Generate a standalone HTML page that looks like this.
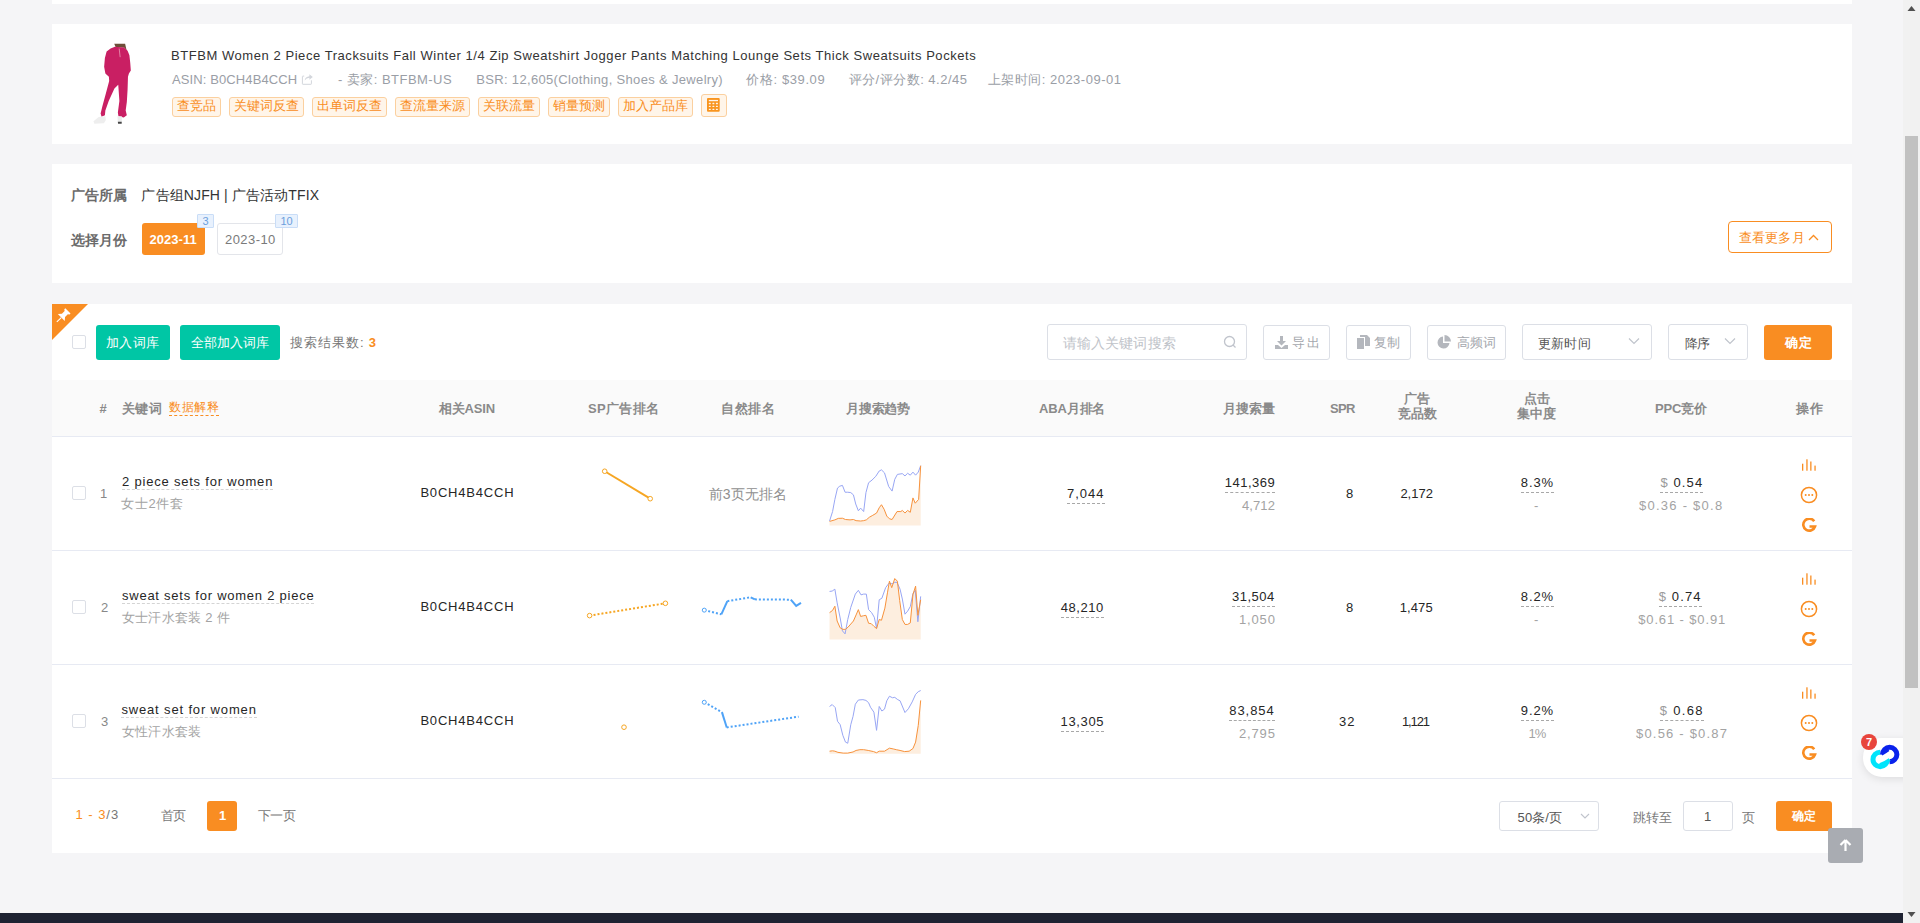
<!DOCTYPE html><html><head><meta charset="utf-8"><style>
html,body{margin:0;padding:0;}
body{width:1920px;height:923px;overflow:hidden;position:relative;background:#f5f5f7;font-family:"Liberation Sans",sans-serif;}
.t{position:absolute;white-space:nowrap;height:20px;line-height:20px;}

</style></head><body>
<div style="position:absolute;left:52px;top:0px;width:1800px;height:4px;background:#fff;"></div>
<div style="position:absolute;left:52px;top:24px;width:1800px;height:120px;background:#fff;"></div>
<div style="position:absolute;left:52px;top:164px;width:1800px;height:119px;background:#fff;"></div>
<div style="position:absolute;left:52px;top:304px;width:1800px;height:549px;background:#fff;"></div>
<svg style="position:absolute;left:82px;top:40px" width="60" height="88" viewBox="0 0 629 923">
<path d="M338,40 L452,40 L468,110 L445,82 L352,74 Z" fill="#6e4d38"/>
<path d="M345,70 L440,78 L478,112 L497,160 L506,240 L512,320 L492,352 L482,385 L478,520 L470,650 L458,740 L470,790 L438,812 L382,800 L376,760 L392,640 L380,470 L340,510 L280,640 L245,740 L240,790 L205,805 L195,770 L215,690 L250,560 L285,430 L282,385 L245,352 L232,280 L240,190 L258,120 L300,90 Z" fill="#c91f63"/>
<path d="M390,90 L400,180" stroke="#e9a0b9" stroke-width="8"/>
<path d="M120,852 L175,808 L245,800 L250,840 L230,872 L130,878 Z" fill="#eeeeee"/>
<path d="M372,800 L418,800 L418,868 L376,872 Z" fill="#ececec"/>
<path d="M376,858 L416,858 L416,878 L378,878 Z" fill="#444"/>
</svg>
<svg style="position:absolute;left:290px;top:66px" width="40" height="26" viewBox="0 0 40 26"><path d="M14.2,10.1 H12.9 Q12.4,10.1 12.4,10.6 V17.8 Q12.4,18.3 12.9,18.3 H20.9 Q21.4,18.3 21.4,17.8 V14.3" fill="none" stroke="#d3d6dc" stroke-width="1"/><path d="M14.6,14.6 Q15.2,10.8 19.4,10.3 V8.2 L22.8,11 L19.4,13.8 V11.8 Q16.5,11.9 14.6,14.6 Z" fill="#d3d6dc"/></svg>
<div style="position:absolute;left:172px;top:97px;width:47px;height:18px;border:1px solid #fbd09f;background:#fff5e9;border-radius:3px;color:#f98d22;font-size:13px;line-height:16px;text-align:center;white-space:nowrap">查竞品</div>
<div style="position:absolute;left:229px;top:97px;width:73px;height:18px;border:1px solid #fbd09f;background:#fff5e9;border-radius:3px;color:#f98d22;font-size:13px;line-height:16px;text-align:center;white-space:nowrap">关键词反查</div>
<div style="position:absolute;left:312px;top:97px;width:73px;height:18px;border:1px solid #fbd09f;background:#fff5e9;border-radius:3px;color:#f98d22;font-size:13px;line-height:16px;text-align:center;white-space:nowrap">出单词反查</div>
<div style="position:absolute;left:395px;top:97px;width:73px;height:18px;border:1px solid #fbd09f;background:#fff5e9;border-radius:3px;color:#f98d22;font-size:13px;line-height:16px;text-align:center;white-space:nowrap">查流量来源</div>
<div style="position:absolute;left:478px;top:97px;width:60px;height:18px;border:1px solid #fbd09f;background:#fff5e9;border-radius:3px;color:#f98d22;font-size:13px;line-height:16px;text-align:center;white-space:nowrap">关联流量</div>
<div style="position:absolute;left:548px;top:97px;width:60px;height:18px;border:1px solid #fbd09f;background:#fff5e9;border-radius:3px;color:#f98d22;font-size:13px;line-height:16px;text-align:center;white-space:nowrap">销量预测</div>
<div style="position:absolute;left:618px;top:97px;width:73px;height:18px;border:1px solid #fbd09f;background:#fff5e9;border-radius:3px;color:#f98d22;font-size:13px;line-height:16px;text-align:center;white-space:nowrap">加入产品库</div>
<div style="position:absolute;left:701px;top:94px;width:24px;height:21px;border:1px solid #fbd09f;background:#fff5e9;border-radius:3px;"></div>
<svg style="position:absolute;left:696px;top:90px" width="36" height="30" viewBox="0 0 36 30"><rect x="11" y="8" width="12.7" height="13.75" rx="1" fill="#f9951f"/><rect x="12.8" y="9.9" width="9.2" height="1.3" fill="#fff5e9"/><g fill="#fff5e9"><rect x="12.8" y="12.85" width="2" height="1.3" rx="0.5"/><rect x="16.4" y="12.85" width="2" height="1.3" rx="0.5"/><rect x="19.9" y="12.85" width="2" height="1.3" rx="0.5"/><rect x="12.8" y="15.75" width="2" height="1.3" rx="0.5"/><rect x="16.4" y="15.75" width="2" height="1.3" rx="0.5"/><rect x="19.9" y="15.75" width="2" height="1.3" rx="0.5"/><rect x="12.8" y="18.65" width="2" height="1.3" rx="0.5"/><rect x="16.4" y="18.65" width="2" height="1.3" rx="0.5"/><rect x="19.9" y="18.65" width="2" height="1.3" rx="0.5"/></g></svg>
<div style="position:absolute;left:142px;top:223px;width:63px;height:32px;background:#f98d22;border-radius:3px;"></div>
<div style="position:absolute;left:217px;top:223px;width:64px;height:30px;border:1px solid #e3e5ea;border-radius:3px;background:#fff"></div>
<div style="position:absolute;left:197px;top:214px;width:15px;height:12px;background:#e8f1fd;border:1px solid #c9ddf7;border-radius:1px;color:#6d9fdc;font-size:11px;line-height:12px;text-align:center">3</div>
<div style="position:absolute;left:275px;top:214px;width:21px;height:12px;background:#e8f1fd;border:1px solid #c9ddf7;border-radius:1px;color:#6d9fdc;font-size:11px;line-height:12px;text-align:center">10</div>
<div style="position:absolute;left:1728px;top:221px;width:102px;height:30px;border:1px solid #f98d22;border-radius:4px;background:#fff"></div>
<svg style="position:absolute;left:1808px;top:233px" width="12" height="9" viewBox="0 0 12 9"><path d="M1 7 L5.5 2.5 L10 7" fill="none" stroke="#f98d22" stroke-width="1.3"/></svg>
<svg style="position:absolute;left:52px;top:304px" width="36" height="36" viewBox="0 0 36 36"><path d="M0 0 H36 L0 36 Z" fill="#f98d22"/><g transform="translate(10.1,12.7) rotate(45) scale(0.97)"><path d="M-3.8 -8.5 H3.8 V-7 L2.3 -6 L2.3 -2 L5 1.2 H-5 L-2.3 -2 L-2.3 -6 L-3.8 -7 Z" fill="#fff"/><rect x="-0.55" y="1.2" width="1.1" height="6.5" fill="#fff"/></g></svg>
<div style="position:absolute;left:72px;top:335px;width:12px;height:12px;border:1px solid #dcdfe6;border-radius:2px;background:#fff"></div>
<div style="position:absolute;left:96px;top:325px;width:74px;height:35px;background:#00c6a5;border-radius:3px;"></div>
<div style="position:absolute;left:180px;top:325px;width:100px;height:35px;background:#00c6a5;border-radius:3px;"></div>
<div style="position:absolute;left:1047px;top:324px;width:198px;height:34px;border:1px solid #dcdfe6;border-radius:3px;background:#fff"></div>
<svg style="position:absolute;left:1223px;top:335px" width="14" height="14" viewBox="0 0 14 14"><circle cx="6.5" cy="6.5" r="5" fill="none" stroke="#c0c4cc" stroke-width="1.3"/><path d="M10 10 L12.5 12.5" stroke="#c0c4cc" stroke-width="1.3"/></svg>
<div style="position:absolute;left:1263px;top:325px;width:65px;height:33px;border:1px solid #dcdfe6;border-radius:3px;background:#fff"></div>
<svg style="position:absolute;left:1275px;top:336px" width="13" height="13" viewBox="0 0 13 13"><path d="M5 0 H8 V5 H11 L6.5 9.5 L2 5 H5 Z" fill="#b4b7bd"/><path d="M0 9 H3 L6.5 12 L10 9 H13 V13 H0 Z" fill="#b4b7bd"/></svg>
<div style="position:absolute;left:1346px;top:325px;width:63px;height:33px;border:1px solid #dcdfe6;border-radius:3px;background:#fff"></div>
<svg style="position:absolute;left:1357px;top:335px" width="13" height="14" viewBox="0 0 13 14"><path d="M0 3 H7 V14 H0 Z" fill="#b4b7bd"/><path d="M3 0 H10 L13 3 V11 H8 V2 H3 Z" fill="#b4b7bd"/></svg>
<div style="position:absolute;left:1427px;top:325px;width:77px;height:33px;border:1px solid #dcdfe6;border-radius:3px;background:#fff"></div>
<svg style="position:absolute;left:1437px;top:335px" width="14" height="14" viewBox="0 0 14 14"><path d="M6 1.5 A6 6 0 1 0 12.5 8 H6 Z" fill="#b4b7bd"/><path d="M7.5 0 A6.5 6.5 0 0 1 14 6.5 H7.5 Z" fill="#b4b7bd"/></svg>
<div style="position:absolute;left:1522px;top:324px;width:128px;height:34px;border:1px solid #dcdfe6;border-radius:3px;background:#fff"></div>
<svg style="position:absolute;left:1628px;top:337px" width="12" height="8" viewBox="0 0 12 8"><path d="M1 1.5 L6 6.5 L11 1.5" fill="none" stroke="#c0c4cc" stroke-width="1.2"/></svg>
<div style="position:absolute;left:1668px;top:324px;width:78px;height:34px;border:1px solid #dcdfe6;border-radius:3px;background:#fff"></div>
<svg style="position:absolute;left:1724px;top:337px" width="12" height="8" viewBox="0 0 12 8"><path d="M1 1.5 L6 6.5 L11 1.5" fill="none" stroke="#c0c4cc" stroke-width="1.2"/></svg>
<div style="position:absolute;left:1764px;top:325px;width:68px;height:35px;background:#f98d22;border-radius:3px;"></div>
<div style="position:absolute;left:52px;top:380px;width:1800px;height:56px;background:#fafafa;"></div>
<div style="position:absolute;left:52px;top:436px;width:1800px;height:1px;background:#e7eaf3;"></div>
<div style="position:absolute;left:52px;top:550px;width:1800px;height:1px;background:#e7eaf3;"></div>
<div style="position:absolute;left:72px;top:486px;width:12px;height:12px;border:1px solid #dcdfe6;border-radius:2px;background:#fff"></div>
<svg style="position:absolute;left:1801px;top:458px" width="16" height="14" viewBox="0 0 16 14"><g fill="#f98d22"><rect x="1" y="5.7" width="1.3" height="7"/><rect x="5.3" y="1.3" width="1.3" height="11.4"/><rect x="9.2" y="3.5" width="1.3" height="9.2"/><rect x="13.4" y="7.6" width="1.3" height="5.1"/></g></svg>
<svg style="position:absolute;left:1800px;top:486px" width="18" height="18" viewBox="0 0 18 18"><circle cx="9" cy="9" r="7.6" fill="none" stroke="#f98d22" stroke-width="1.5"/><g fill="#f98d22"><circle cx="5.7" cy="9" r="1"/><circle cx="9" cy="9" r="1"/><circle cx="12.3" cy="9" r="1"/></g></svg>
<svg style="position:absolute;left:1801px;top:518px" width="16" height="15" viewBox="0 0 16 15"><path d="M13.2 3.2 A6 6 0 1 0 14 8.5 H8.5" fill="none" stroke="#f98d22" stroke-width="2.6"/></svg>
<div style="position:absolute;left:52px;top:664px;width:1800px;height:1px;background:#e7eaf3;"></div>
<div style="position:absolute;left:72px;top:600px;width:12px;height:12px;border:1px solid #dcdfe6;border-radius:2px;background:#fff"></div>
<svg style="position:absolute;left:1801px;top:572px" width="16" height="14" viewBox="0 0 16 14"><g fill="#f98d22"><rect x="1" y="5.7" width="1.3" height="7"/><rect x="5.3" y="1.3" width="1.3" height="11.4"/><rect x="9.2" y="3.5" width="1.3" height="9.2"/><rect x="13.4" y="7.6" width="1.3" height="5.1"/></g></svg>
<svg style="position:absolute;left:1800px;top:600px" width="18" height="18" viewBox="0 0 18 18"><circle cx="9" cy="9" r="7.6" fill="none" stroke="#f98d22" stroke-width="1.5"/><g fill="#f98d22"><circle cx="5.7" cy="9" r="1"/><circle cx="9" cy="9" r="1"/><circle cx="12.3" cy="9" r="1"/></g></svg>
<svg style="position:absolute;left:1801px;top:632px" width="16" height="15" viewBox="0 0 16 15"><path d="M13.2 3.2 A6 6 0 1 0 14 8.5 H8.5" fill="none" stroke="#f98d22" stroke-width="2.6"/></svg>
<div style="position:absolute;left:52px;top:778px;width:1800px;height:1px;background:#e7eaf3;"></div>
<div style="position:absolute;left:72px;top:714px;width:12px;height:12px;border:1px solid #dcdfe6;border-radius:2px;background:#fff"></div>
<svg style="position:absolute;left:1801px;top:686px" width="16" height="14" viewBox="0 0 16 14"><g fill="#f98d22"><rect x="1" y="5.7" width="1.3" height="7"/><rect x="5.3" y="1.3" width="1.3" height="11.4"/><rect x="9.2" y="3.5" width="1.3" height="9.2"/><rect x="13.4" y="7.6" width="1.3" height="5.1"/></g></svg>
<svg style="position:absolute;left:1800px;top:714px" width="18" height="18" viewBox="0 0 18 18"><circle cx="9" cy="9" r="7.6" fill="none" stroke="#f98d22" stroke-width="1.5"/><g fill="#f98d22"><circle cx="5.7" cy="9" r="1"/><circle cx="9" cy="9" r="1"/><circle cx="12.3" cy="9" r="1"/></g></svg>
<svg style="position:absolute;left:1801px;top:746px" width="16" height="15" viewBox="0 0 16 15"><path d="M13.2 3.2 A6 6 0 1 0 14 8.5 H8.5" fill="none" stroke="#f98d22" stroke-width="2.6"/></svg>
<svg style="position:absolute;left:580px;top:455px" width="100" height="60" viewBox="0 0 100 60"><path d="M24.7 16.25 L70.2 43.7" stroke="#f6a623" stroke-width="2"/><circle cx="24.7" cy="16.25" r="2.3" fill="#fff" stroke="#f6a623" stroke-width="1"/><circle cx="70.2" cy="43.7" r="2.3" fill="#fff" stroke="#f6a623" stroke-width="1"/></svg>
<svg style="position:absolute;left:580px;top:590px" width="100" height="40" viewBox="0 0 100 40"><path d="M9.6 25.6 L85.4 13.3" stroke="#f6a623" stroke-width="2" stroke-dasharray="2 2"/><circle cx="9.6" cy="25.6" r="2.3" fill="#fff" stroke="#f6a623" stroke-width="1"/><circle cx="85.4" cy="13.3" r="2.3" fill="#fff" stroke="#f6a623" stroke-width="1"/></svg>
<svg style="position:absolute;left:600px;top:710px" width="50" height="30" viewBox="0 0 50 30"><circle cx="24" cy="17.2" r="2.3" fill="#fff" stroke="#f6a623" stroke-width="1"/></svg>
<svg style="position:absolute;left:695px;top:585px" width="115" height="40" viewBox="0 0 115 40" fill="none"><path d="M9.28 25.15 L26.35 29.34" stroke="#4fa3f7" stroke-width="2" stroke-dasharray="2 2"/><path d="M26.35 29.34 L32.34 16.17" stroke="#4fa3f7" stroke-width="2"/><path d="M32.34 16.17 L55.69 12.28" stroke="#4fa3f7" stroke-width="2" stroke-dasharray="2 2"/><path d="M55.69 12.28 L59.88 14.37" stroke="#4fa3f7" stroke-width="2"/><path d="M59.88 14.37 L95.81 14.67" stroke="#4fa3f7" stroke-width="2" stroke-dasharray="2 2"/><path d="M95.81 14.67 L101.20 20.96 L105.99 17.96" stroke="#4fa3f7" stroke-width="2"/><circle cx="9.28" cy="25.15" r="2" fill="#fff" stroke="#4fa3f7" stroke-width="1"/></svg>
<svg style="position:absolute;left:695px;top:690px" width="115" height="50" viewBox="0 0 115 50" fill="none"><path d="M9.28 12.28 L26.95 22.16" stroke="#4fa3f7" stroke-width="2" stroke-dasharray="2 2"/><path d="M26.95 22.16 L31.74 37.43" stroke="#4fa3f7" stroke-width="2"/><path d="M31.74 37.43 L103.59 26.65" stroke="#4fa3f7" stroke-width="2" stroke-dasharray="2 2"/><circle cx="9.28" cy="12.28" r="2" fill="#fff" stroke="#4fa3f7" stroke-width="1"/></svg>
<svg style="position:absolute;left:825px;top:460px" width="100" height="70" viewBox="0 0 100 70"><polygon points="4.55,65.58 4.55,61.41 9.86,59.89 13.27,58.38 17.44,58.23 20.47,59.51 25.02,59.89 28.43,59.51 31.08,60.65 35.63,61.03 38.67,60.65 41.32,59.89 44.35,57.24 47.76,55.34 51.55,53.07 54.21,47.76 56.48,44.73 59.14,49.28 61.79,56.10 64.44,58.76 67.10,59.51 72.02,51.55 75.82,51.55 77.33,50.42 79.98,53.07 82.64,50.42 85.29,52.31 87.95,37.91 90.22,43.21 93.63,39.42 95.68,5.69 95.68,65.58" fill="#fdeedf"/><polyline points="4.55,61.03 7.58,51.55 9.86,39.42 12.51,28.05 14.78,26.16 17.44,25.40 20.09,32.22 22.74,32.22 25.78,32.60 28.43,34.87 30.71,43.97 33.36,50.80 35.63,48.14 38.67,51.55 40.94,32.60 43.59,22.74 47.01,20.09 50.80,16.30 54.21,10.99 56.48,9.86 59.51,12.89 63.68,26.54 67.10,31.08 69.75,19.33 72.40,14.40 77.33,13.65 79.98,15.92 82.64,13.27 85.29,15.16 87.95,12.13 90.60,15.16 93.25,12.13 95.68,5.69" fill="none" stroke="#98a6f4" stroke-width="1"/><polyline points="4.55,61.41 9.86,59.89 13.27,58.38 17.44,58.23 20.47,59.51 25.02,59.89 28.43,59.51 31.08,60.65 35.63,61.03 38.67,60.65 41.32,59.89 44.35,57.24 47.76,55.34 51.55,53.07 54.21,47.76 56.48,44.73 59.14,49.28 61.79,56.10 64.44,58.76 67.10,59.51 72.02,51.55 75.82,51.55 77.33,50.42 79.98,53.07 82.64,50.42 85.29,52.31 87.95,37.91 90.22,43.21 93.63,39.42 95.68,5.69" fill="none" stroke="#f7923c" stroke-width="1"/></svg>
<svg style="position:absolute;left:825px;top:574px" width="100" height="70" viewBox="0 0 100 70"><polygon points="4.55,65.58 4.55,38.67 7.58,36.39 9.86,32.22 12.13,47.01 15.16,53.83 17.82,55.34 20.47,55.34 23.12,53.07 25.78,50.04 28.43,47.01 31.08,40.94 33.36,35.63 35.63,42.46 38.67,41.70 40.94,41.32 43.59,49.28 46.25,49.66 48.90,52.31 51.55,54.59 54.21,45.49 56.48,46.25 59.89,34.12 62.55,18.20 64.44,7.20 66.72,13.65 69.75,4.55 72.40,7.20 74.68,26.54 77.33,45.49 79.98,50.42 82.64,50.42 85.29,48.90 87.95,20.47 90.60,12.13 92.87,41.32 95.68,25.78 95.68,65.58" fill="#fdeedf"/><polyline points="4.55,17.44 7.20,17.06 9.86,15.16 12.13,28.81 15.16,43.97 17.44,56.86 20.09,59.89 22.74,45.49 25.78,33.36 30.33,20.09 33.36,16.30 36.01,20.85 38.67,20.09 41.32,20.09 43.59,35.63 46.63,38.67 49.28,43.21 51.55,54.21 54.21,25.78 56.86,24.26 60.65,13.65 64.06,9.10 67.10,9.86 69.75,8.34 72.02,8.34 75.06,15.16 77.33,25.02 79.98,40.18 82.64,37.15 85.29,32.60 87.95,19.71 90.22,16.30 92.87,47.76 95.68,22.37" fill="none" stroke="#98a6f4" stroke-width="1"/><polyline points="4.55,38.67 7.58,36.39 9.86,32.22 12.13,47.01 15.16,53.83 17.82,55.34 20.47,55.34 23.12,53.07 25.78,50.04 28.43,47.01 31.08,40.94 33.36,35.63 35.63,42.46 38.67,41.70 40.94,41.32 43.59,49.28 46.25,49.66 48.90,52.31 51.55,54.59 54.21,45.49 56.48,46.25 59.89,34.12 62.55,18.20 64.44,7.20 66.72,13.65 69.75,4.55 72.40,7.20 74.68,26.54 77.33,45.49 79.98,50.42 82.64,50.42 85.29,48.90 87.95,20.47 90.60,12.13 92.87,41.32 95.68,25.78" fill="none" stroke="#f7923c" stroke-width="1"/></svg>
<svg style="position:absolute;left:825px;top:686px" width="100" height="70" viewBox="0 0 100 70"><polygon points="4.55,67.70 4.55,65.20 7.58,64.82 9.86,65.20 12.89,66.34 18.20,67.10 22.74,67.10 28.05,65.96 31.08,64.44 34.87,63.68 38.67,63.68 43.21,64.44 48.52,65.58 51.55,66.72 54.21,65.20 59.51,65.20 64.44,62.17 68.23,62.93 71.27,63.68 75.06,64.44 79.61,65.58 84.15,65.20 87.95,62.55 90.60,56.10 93.25,39.42 95.68,14.40 95.68,67.70" fill="#fdeedf"/><polyline points="4.55,20.47 7.20,18.57 10.24,21.61 12.51,35.25 15.16,38.67 17.82,49.28 20.47,56.10 22.74,57.24 25.78,38.67 28.05,30.33 30.33,18.20 33.36,14.03 37.91,13.65 40.94,14.40 43.59,16.68 45.49,21.23 48.90,26.16 51.55,44.35 54.21,20.47 56.86,25.02 59.51,23.12 61.79,14.78 64.44,10.24 67.48,11.75 69.75,11.37 72.78,13.65 75.06,14.78 79.98,26.54 83.40,22.74 87.19,15.92 90.60,8.34 93.25,5.69 95.68,4.55" fill="none" stroke="#98a6f4" stroke-width="1"/><polyline points="4.55,65.20 7.58,64.82 9.86,65.20 12.89,66.34 18.20,67.10 22.74,67.10 28.05,65.96 31.08,64.44 34.87,63.68 38.67,63.68 43.21,64.44 48.52,65.58 51.55,66.72 54.21,65.20 59.51,65.20 64.44,62.17 68.23,62.93 71.27,63.68 75.06,64.44 79.61,65.58 84.15,65.20 87.95,62.55 90.60,56.10 93.25,39.42 95.68,14.40" fill="none" stroke="#f7923c" stroke-width="1"/></svg>
<div style="position:absolute;left:207px;top:801px;width:30px;height:30px;background:#f98d22;border-radius:3px;"></div>
<div style="position:absolute;left:1499px;top:801px;width:98px;height:28px;border:1px solid #dcdfe6;border-radius:3px;background:#fff"></div>
<svg style="position:absolute;left:1580px;top:813px" width="10" height="7" viewBox="0 0 10 7"><path d="M1 1 L5 5 L9 1" fill="none" stroke="#c0c4cc" stroke-width="1.1"/></svg>
<div style="position:absolute;left:1683px;top:801px;width:48px;height:28px;border:1px solid #dcdfe6;border-radius:3px;background:#fff"></div>
<div style="position:absolute;left:1776px;top:801px;width:56px;height:30px;background:#f98d22;border-radius:3px;"></div>
<div id="title" class="t" style="left:171.00px;top:45.90px;font-size:13px;color:#333;font-weight:400;letter-spacing:0.555px;">BTFBM Women 2 Piece Tracksuits Fall Winter 1/4 Zip Sweatshirt Jogger Pants Matching Lounge Sets Thick Sweatsuits Pockets</div>
<div id="asin" class="t" style="left:172.00px;top:70.10px;font-size:13px;color:#9a9ea6;font-weight:400;letter-spacing:0.113px;">ASIN: B0CH4B4CCH</div>
<div id="seller" class="t" style="left:338.00px;top:70.10px;font-size:13px;color:#9a9ea6;font-weight:400;letter-spacing:0.462px;">- 卖家: BTFBM-US</div>
<div id="bsr" class="t" style="left:476.19px;top:70.10px;font-size:13px;color:#9a9ea6;font-weight:400;letter-spacing:0.335px;">BSR: 12,605(Clothing, Shoes &amp; Jewelry)</div>
<div id="price" class="t" style="left:746.39px;top:70.10px;font-size:13px;color:#9a9ea6;font-weight:400;letter-spacing:0.589px;">价格: $39.09</div>
<div id="rating" class="t" style="left:848.60px;top:70.10px;font-size:13px;color:#9a9ea6;font-weight:400;letter-spacing:0.492px;">评分/评分数: 4.2/45</div>
<div id="date" class="t" style="left:987.60px;top:70.10px;font-size:13px;color:#9a9ea6;font-weight:400;letter-spacing:0.513px;">上架时间: 2023-09-01</div>
<div id="adl" class="t" style="left:71.39px;top:185.10px;font-size:14px;color:#6b6b6b;font-weight:700;letter-spacing:-0.233px;">广告所属</div>
<div id="adv" class="t" style="left:141.39px;top:185.10px;font-size:14px;color:#333;font-weight:400;letter-spacing:0.129px;">广告组NJFH | 广告活动TFIX</div>
<div id="monl" class="t" style="left:71.39px;top:229.50px;font-size:14px;color:#6b6b6b;font-weight:700;letter-spacing:-0.233px;">选择月份</div>
<div id="m11" class="t" style="left:149.39px;top:229.90px;font-size:13px;color:#fff;font-weight:700;letter-spacing:0.067px;">2023-11</div>
<div id="m10" class="t" style="left:225.00px;top:229.90px;font-size:13px;color:#7a7a7a;font-weight:400;letter-spacing:0.433px;">2023-10</div>
<div id="more" class="t" style="left:1738.50px;top:227.50px;font-size:13px;color:#f98d22;font-weight:400;letter-spacing:0.288px;">查看更多月</div>
<div id="add1" class="t" style="left:106.39px;top:332.80px;font-size:13px;color:#fff;font-weight:400;letter-spacing:0.100px;">加入词库</div>
<div id="add2" class="t" style="left:191.00px;top:332.80px;font-size:13px;color:#fff;font-weight:400;letter-spacing:0.000px;">全部加入词库</div>
<div id="cnt" class="t" style="left:290.00px;top:332.80px;font-size:13px;color:#777;font-weight:400;letter-spacing:1.000px;">搜索结果数:</div>
<div id="cnt3" class="t" style="left:368.79px;top:332.80px;font-size:13px;color:#f98d22;font-weight:700;letter-spacing:0.000px;">3</div>
<div id="ph" class="t" style="left:1062.50px;top:333.10px;font-size:14px;color:#c0c3c9;font-weight:400;letter-spacing:0.179px;">请输入关键词搜索</div>
<div id="exp" class="t" style="left:1292.00px;top:332.80px;font-size:13px;color:#a4a7ad;font-weight:400;letter-spacing:1.750px;">导出</div>
<div id="copy" class="t" style="left:1373.50px;top:332.80px;font-size:13px;color:#a4a7ad;font-weight:400;letter-spacing:0.500px;">复制</div>
<div id="freq" class="t" style="left:1456.50px;top:332.80px;font-size:13px;color:#a4a7ad;font-weight:400;letter-spacing:0.125px;">高频词</div>
<div id="sort" class="t" style="left:1538.00px;top:333.50px;font-size:13px;color:#555;font-weight:400;letter-spacing:0.233px;">更新时间</div>
<div id="ord" class="t" style="left:1684.79px;top:333.50px;font-size:13px;color:#555;font-weight:400;letter-spacing:-0.400px;">降序</div>
<div id="ok" class="t" style="left:1785.00px;top:332.90px;font-size:13px;color:#fff;font-weight:700;letter-spacing:0.500px;">确定</div>
<div id="h_idx" class="t" style="left:99.60px;top:399.30px;font-size:13px;color:#8a8a8a;font-weight:700;letter-spacing:0.000px;">#</div>
<div id="h_kw" class="t" style="left:122.00px;top:399.30px;font-size:13px;color:#8a8a8a;font-weight:700;letter-spacing:0.350px;">关键词</div>
<div id="h_exp" class="t" style="left:169.39px;top:396.90px;font-size:12px;color:#f98d22;font-weight:400;letter-spacing:0.467px;"><span class="ul" style="border-bottom:1px dashed #f98d22;padding-bottom:1px">数据解释</span></div>
<div id="h_asin" class="t" style="left:439.00px;top:399.30px;font-size:13px;color:#8a8a8a;font-weight:700;letter-spacing:-0.200px;">相关ASIN</div>
<div id="h_sp" class="t" style="left:588.00px;top:399.30px;font-size:13px;color:#8a8a8a;font-weight:700;letter-spacing:0.340px;">SP广告排名</div>
<div id="h_nat" class="t" style="left:721.39px;top:399.30px;font-size:13px;color:#8a8a8a;font-weight:700;letter-spacing:0.533px;">自然排名</div>
<div id="h_trend" class="t" style="left:846.00px;top:399.30px;font-size:13px;color:#8a8a8a;font-weight:700;letter-spacing:-0.250px;">月搜索趋势</div>
<div id="h_aba" class="t" style="left:1039.00px;top:399.30px;font-size:13px;color:#8a8a8a;font-weight:700;letter-spacing:-0.140px;">ABA月排名</div>
<div id="h_vol" class="t" style="left:1223.00px;top:399.30px;font-size:13px;color:#8a8a8a;font-weight:700;letter-spacing:0.000px;">月搜索量</div>
<div id="h_spr" class="t" style="left:1330.00px;top:399.30px;font-size:13px;color:#8a8a8a;font-weight:700;letter-spacing:-0.650px;">SPR</div>
<div id="h_ad1" class="t" style="left:1403.70px;top:389.00px;font-size:13px;color:#8a8a8a;font-weight:700;letter-spacing:0.000px;">广告</div>
<div id="h_ad2" class="t" style="left:1397.60px;top:404.00px;font-size:13px;color:#8a8a8a;font-weight:700;letter-spacing:0.200px;">竞品数</div>
<div id="h_cl1" class="t" style="left:1523.70px;top:389.00px;font-size:13px;color:#8a8a8a;font-weight:700;letter-spacing:0.000px;">点击</div>
<div id="h_cl2" class="t" style="left:1517.39px;top:404.00px;font-size:13px;color:#8a8a8a;font-weight:700;letter-spacing:0.000px;">集中度</div>
<div id="h_ppc" class="t" style="left:1655.00px;top:399.30px;font-size:13px;color:#8a8a8a;font-weight:700;letter-spacing:-0.175px;">PPC竞价</div>
<div id="h_op" class="t" style="left:1796.00px;top:399.30px;font-size:13px;color:#8a8a8a;font-weight:700;letter-spacing:0.700px;">操作</div>
<div id="r0_idx" class="t" style="left:100.00px;top:483.50px;font-size:13px;color:#888;font-weight:400;letter-spacing:0.000px;">1</div>
<div id="r0_kw" class="t" style="left:122.00px;top:471.90px;font-size:13px;color:#262626;font-weight:400;letter-spacing:0.795px;"><span class="ul" style="border-bottom:1px dashed #d4d4d4;padding-bottom:0px">2 piece sets for women</span></div>
<div id="r0_zh" class="t" style="left:121.39px;top:493.50px;font-size:13px;color:#a3a3a3;font-weight:400;letter-spacing:0.500px;">女士2件套</div>
<div id="r0_asin" class="t" style="left:420.39px;top:483.40px;font-size:13px;color:#262626;font-weight:400;letter-spacing:0.800px;">B0CH4B4CCH</div>
<div id="r0_nat" class="t" style="left:708.60px;top:483.50px;font-size:14px;color:#8f8f8f;font-weight:400;letter-spacing:0.180px;">前3页无排名</div>
<div id="r0_aba" class="t" style="left:1067.00px;top:483.60px;font-size:13px;color:#262626;font-weight:400;letter-spacing:1.000px;"><span class="ul" style="border-bottom:1px dashed #a8a8a8;padding-bottom:2px">7,044</span></div>
<div id="r0_vol" class="t" style="left:1224.79px;top:472.80px;font-size:13px;color:#262626;font-weight:400;letter-spacing:0.500px;"><span class="ul" style="border-bottom:1px dashed #a8a8a8;padding-bottom:2px">141,369</span></div>
<div id="r0_vol2" class="t" style="left:1242.00px;top:495.60px;font-size:13px;color:#a3a3a3;font-weight:400;letter-spacing:0.100px;">4,712</div>
<div id="r0_spr" class="t" style="left:1346.00px;top:483.50px;font-size:13px;color:#262626;font-weight:400;letter-spacing:0.000px;">8</div>
<div id="r0_ads" class="t" style="left:1400.39px;top:483.50px;font-size:13px;color:#262626;font-weight:400;letter-spacing:0.000px;">2,172</div>
<div id="r0_click" class="t" style="left:1520.79px;top:472.75px;font-size:13px;color:#262626;font-weight:400;letter-spacing:0.900px;"><span class="ul" style="border-bottom:1px dashed #a8a8a8;padding-bottom:2px">8.3%</span></div>
<div id="r0_click2" class="t" style="left:1534.00px;top:495.50px;font-size:13px;color:#a3a3a3;font-weight:400;letter-spacing:0.000px;">-</div>
<div id="r0_ppc" class="t" style="left:1660.39px;top:472.75px;font-size:13px;color:#262626;font-weight:400;letter-spacing:1.120px;"><span class="ul" style="border-bottom:1px dashed #a8a8a8;padding-bottom:2px"><span style="color:#9a9a9a">$</span> 0.54</span></div>
<div id="r0_rng" class="t" style="left:1639.00px;top:495.50px;font-size:13px;color:#a3a3a3;font-weight:400;letter-spacing:1.255px;">$0.36 - $0.8</div>
<div id="r1_idx" class="t" style="left:101.00px;top:597.50px;font-size:13px;color:#888;font-weight:400;letter-spacing:0.000px;">2</div>
<div id="r1_kw" class="t" style="left:122.00px;top:585.90px;font-size:13px;color:#262626;font-weight:400;letter-spacing:0.756px;"><span class="ul" style="border-bottom:1px dashed #d4d4d4;padding-bottom:0px">sweat sets for women 2 piece</span></div>
<div id="r1_zh" class="t" style="left:122.00px;top:607.50px;font-size:13px;color:#a3a3a3;font-weight:400;letter-spacing:0.244px;">女士汗水套装 2 件</div>
<div id="r1_asin" class="t" style="left:420.39px;top:597.40px;font-size:13px;color:#262626;font-weight:400;letter-spacing:0.800px;">B0CH4B4CCH</div>
<div id="r1_aba" class="t" style="left:1060.79px;top:597.60px;font-size:13px;color:#262626;font-weight:400;letter-spacing:0.540px;"><span class="ul" style="border-bottom:1px dashed #a8a8a8;padding-bottom:2px">48,210</span></div>
<div id="r1_vol" class="t" style="left:1232.00px;top:586.80px;font-size:13px;color:#262626;font-weight:400;letter-spacing:0.480px;"><span class="ul" style="border-bottom:1px dashed #a8a8a8;padding-bottom:2px">31,504</span></div>
<div id="r1_vol2" class="t" style="left:1239.00px;top:609.60px;font-size:13px;color:#a3a3a3;font-weight:400;letter-spacing:0.850px;">1,050</div>
<div id="r1_spr" class="t" style="left:1346.00px;top:597.50px;font-size:13px;color:#262626;font-weight:400;letter-spacing:0.000px;">8</div>
<div id="r1_ads" class="t" style="left:1399.79px;top:597.50px;font-size:13px;color:#262626;font-weight:400;letter-spacing:0.075px;">1,475</div>
<div id="r1_click" class="t" style="left:1520.79px;top:586.75px;font-size:13px;color:#262626;font-weight:400;letter-spacing:0.900px;"><span class="ul" style="border-bottom:1px dashed #a8a8a8;padding-bottom:2px">8.2%</span></div>
<div id="r1_click2" class="t" style="left:1534.00px;top:609.50px;font-size:13px;color:#a3a3a3;font-weight:400;letter-spacing:0.000px;">-</div>
<div id="r1_ppc" class="t" style="left:1658.79px;top:586.75px;font-size:13px;color:#262626;font-weight:400;letter-spacing:1.120px;"><span class="ul" style="border-bottom:1px dashed #a8a8a8;padding-bottom:2px"><span style="color:#9a9a9a">$</span> 0.74</span></div>
<div id="r1_rng" class="t" style="left:1638.19px;top:609.50px;font-size:13px;color:#a3a3a3;font-weight:400;letter-spacing:0.867px;">$0.61 - $0.91</div>
<div id="r2_idx" class="t" style="left:101.00px;top:711.50px;font-size:13px;color:#888;font-weight:400;letter-spacing:0.000px;">3</div>
<div id="r2_kw" class="t" style="left:121.39px;top:699.90px;font-size:13px;color:#262626;font-weight:400;letter-spacing:0.850px;"><span class="ul" style="border-bottom:1px dashed #d4d4d4;padding-bottom:0px">sweat set for women</span></div>
<div id="r2_zh" class="t" style="left:122.00px;top:721.50px;font-size:13px;color:#a3a3a3;font-weight:400;letter-spacing:0.200px;">女性汗水套装</div>
<div id="r2_asin" class="t" style="left:420.39px;top:711.40px;font-size:13px;color:#262626;font-weight:400;letter-spacing:0.800px;">B0CH4B4CCH</div>
<div id="r2_aba" class="t" style="left:1060.60px;top:711.60px;font-size:13px;color:#262626;font-weight:400;letter-spacing:0.640px;"><span class="ul" style="border-bottom:1px dashed #a8a8a8;padding-bottom:2px">13,305</span></div>
<div id="r2_vol" class="t" style="left:1229.19px;top:700.80px;font-size:13px;color:#262626;font-weight:400;letter-spacing:0.960px;"><span class="ul" style="border-bottom:1px dashed #a8a8a8;padding-bottom:2px">83,854</span></div>
<div id="r2_vol2" class="t" style="left:1239.00px;top:723.60px;font-size:13px;color:#a3a3a3;font-weight:400;letter-spacing:0.850px;">2,795</div>
<div id="r2_spr" class="t" style="left:1339.00px;top:711.50px;font-size:13px;color:#262626;font-weight:400;letter-spacing:1.000px;">32</div>
<div id="r2_ads" class="t" style="left:1402.00px;top:711.50px;font-size:13px;color:#262626;font-weight:400;letter-spacing:-1.125px;">1,121</div>
<div id="r2_click" class="t" style="left:1520.79px;top:700.75px;font-size:13px;color:#262626;font-weight:400;letter-spacing:0.900px;"><span class="ul" style="border-bottom:1px dashed #a8a8a8;padding-bottom:2px">9.2%</span></div>
<div id="r2_click2" class="t" style="left:1528.39px;top:723.50px;font-size:13px;color:#a3a3a3;font-weight:400;letter-spacing:-0.900px;">1%</div>
<div id="r2_ppc" class="t" style="left:1659.79px;top:700.75px;font-size:13px;color:#262626;font-weight:400;letter-spacing:1.320px;"><span class="ul" style="border-bottom:1px dashed #a8a8a8;padding-bottom:2px"><span style="color:#9a9a9a">$</span> 0.68</span></div>
<div id="r2_rng" class="t" style="left:1636.00px;top:723.50px;font-size:13px;color:#a3a3a3;font-weight:400;letter-spacing:1.200px;">$0.56 - $0.87</div>
<div id="pg_rng" class="t" style="left:75.60px;top:805.00px;font-size:13px;color:#777;font-weight:400;letter-spacing:0.950px;"><span style="color:#f98d22">1 - 3</span>/3</div>
<div id="pg_first" class="t" style="left:161.00px;top:805.50px;font-size:13px;color:#777;font-weight:400;letter-spacing:-0.700px;">首页</div>
<div id="pg_1" class="t" style="left:219.00px;top:806.00px;font-size:13px;color:#fff;font-weight:700;letter-spacing:0.000px;">1</div>
<div id="pg_next" class="t" style="left:257.60px;top:805.50px;font-size:13px;color:#777;font-weight:400;letter-spacing:-0.300px;">下一页</div>
<div id="pg_sz" class="t" style="left:1517.60px;top:807.50px;font-size:13px;color:#555;font-weight:400;letter-spacing:0.075px;">50条/页</div>
<div id="pg_jump" class="t" style="left:1633.19px;top:807.50px;font-size:13px;color:#777;font-weight:400;letter-spacing:-0.150px;">跳转至</div>
<div id="pg_in" class="t" style="left:1704.00px;top:806.90px;font-size:13px;color:#555;font-weight:400;letter-spacing:0.000px;">1</div>
<div id="pg_page" class="t" style="left:1742.00px;top:807.50px;font-size:13px;color:#777;font-weight:400;letter-spacing:0.000px;">页</div>
<div id="pg_ok" class="t" style="left:1791.60px;top:806.00px;font-size:12px;color:#fff;font-weight:700;letter-spacing:0.600px;">确定</div>
<div style="position:absolute;left:0px;top:913px;width:1903px;height:10px;background:#1e2232;"></div>
<div style="position:absolute;left:1828px;top:828px;width:35px;height:35px;background:#a9acb2;border-radius:3px;"></div>
<svg style="position:absolute;left:1838px;top:838px" width="15" height="15" viewBox="0 0 15 15"><path d="M7.5 2 L2.5 7 M7.5 2 L12.5 7 M7.5 2 V13" fill="none" stroke="#fff" stroke-width="2.2"/></svg>
<div style="position:absolute;left:1863px;top:738px;width:60px;height:39px;background:#fff;border-radius:19px 0 0 19px;box-shadow:0 2px 8px rgba(0,0,0,0.10)"></div>
<svg style="position:absolute;left:1840px;top:720px" width="80" height="70" viewBox="0 0 1055 923">
<path d="M530,425 A95,95 0 1 0 625,520" fill="none" stroke="#00e4fb" stroke-width="66"/>
<path d="M560,455 A95,95 0 1 1 655,550" fill="none" stroke="#0a22ec" stroke-width="66"/>
<path d="M560,440 L640,395 L690,460 L640,540 L560,560 Z" fill="#fff"/>
<path d="M548,452 Q600,420 640,392" fill="none" stroke="#0a22ec" stroke-width="40"/>
<path d="M525,590 Q600,560 655,520" fill="none" stroke="#00e4fb" stroke-width="40"/>
</svg>
<div style="position:absolute;left:1861px;top:734px;width:16px;height:16px;background:#e8453c;border-radius:50%;color:#fff;font-size:11px;line-height:16px;text-align:center;font-weight:700">7</div>
<div style="position:absolute;left:1903px;top:0px;width:17px;height:923px;background:#f1f1f1;"></div>
<div style="position:absolute;left:1905px;top:136px;width:13px;height:552px;background:#c1c1c1;"></div>
<svg style="position:absolute;left:1903px;top:0px" width="17" height="17" viewBox="0 0 17 17"><path d="M4.5 11 L8.5 6 L12.5 11 Z" fill="#505050"/></svg>
<svg style="position:absolute;left:1903px;top:906px" width="17" height="17" viewBox="0 0 17 17"><path d="M4.5 6 L8.5 11 L12.5 6 Z" fill="#505050"/></svg>
</body></html>
